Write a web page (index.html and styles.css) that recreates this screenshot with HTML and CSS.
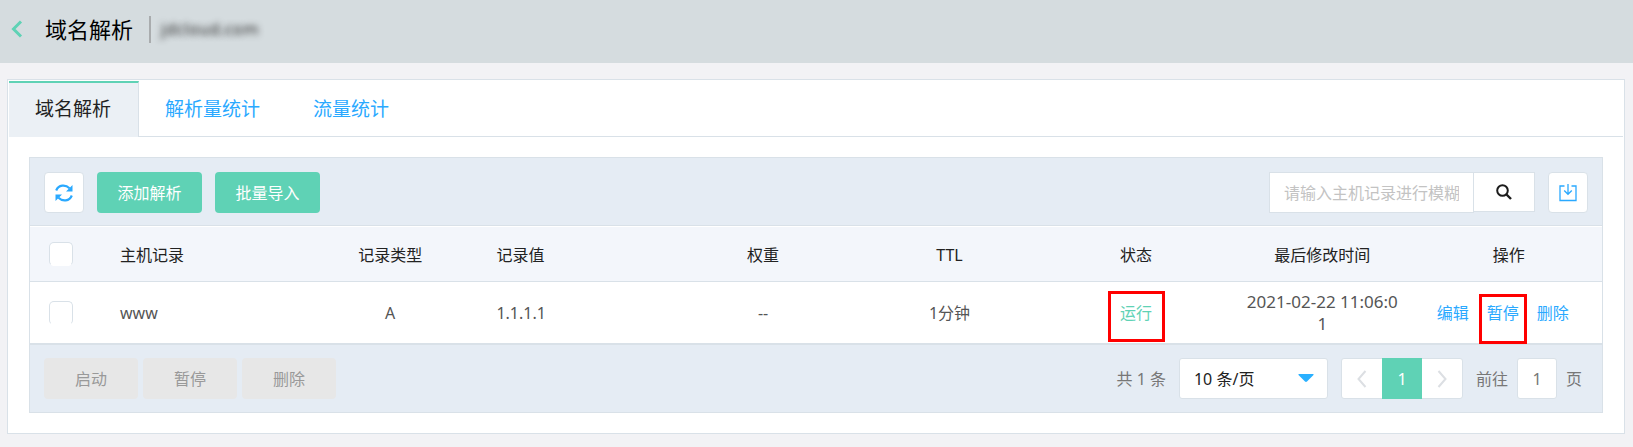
FILE: index.html
```html
<!DOCTYPE html>
<html lang="zh-CN">
<head>
<meta charset="utf-8">
<title>域名解析</title>
<link rel="stylesheet" href="styles.css">
</head>
<body>
<header class="page-head">
  <a class="back" href="#" aria-label="返回"><svg width="12" height="18" viewBox="0 0 12 18"><path d="M10 1.500 2.500 9l7.500 7.500" fill="none" stroke="#5fd2b5" stroke-width="3"/></svg></a>
  <h1 class="title">域名解析</h1>
  <span class="domain">jdcloud.com</span>
</header>
<main class="card">
  <nav class="tabs">
    <a class="tab tab-active" href="#">域名解析</a>
    <a class="tab" href="#">解析量统计</a>
    <a class="tab" href="#">流量统计</a>
  </nav>
  <section class="panel">
    <div class="toolbar">
      <button class="icon-btn" type="button" aria-label="刷新"><svg width="18" height="18" viewBox="0 0 18 18"><g fill="none" stroke="#2aa9ff" stroke-width="2.200"><path d="M1.200 6.500C3.500.6 10.500.2 14.500 4.200"/><path d="M16.800 11.500C14.500 17.400 7.500 17.800 3.500 13.800"/></g><path d="M17.500 1v6.500H11zM.5 17v-6.500H7z" fill="#2aa9ff"/></svg></button>
      <button class="btn" type="button">添加解析</button>
      <button class="btn" type="button">批量导入</button>
      <form class="search">
        <input class="search-input" type="text" aria-label="主机记录" placeholder="请输入主机记录进行模糊查询">
        <button class="search-btn" type="button" aria-label="搜索"><svg width="16" height="16" viewBox="0 0 16 16"><circle cx="6.500" cy="6.500" r="5.300" fill="none" stroke="#1c1c1c" stroke-width="2"/><path d="m10.500 10.500 4.500 4.500" stroke="#1c1c1c" stroke-width="2.400"/></svg></button>
      </form>
      <button class="icon-btn" type="button" aria-label="导出"><svg width="18" height="18" viewBox="0 0 18 18"><g fill="none" stroke="#2aa9ff" stroke-width="1.300"><path d="M5.500 2H1v14.500h16V2h-4.500"/><path d="M9 0v10M5.200 6.500 9 10.300l3.800-3.800"/></g></svg></button>
    </div>
    <table class="records">
      <colgroup><col class="col-check"><col class="col-host"><col><col><col><col><col><col><col></colgroup>
      <thead>
        <tr>
          <th class="check"><input class="checkbox" type="checkbox" aria-label="全选"></th>
          <th class="left">主机记录</th><th>记录类型</th><th class="left">记录值</th><th>权重</th><th>TTL</th><th>状态</th><th>最后修改时间</th><th>操作</th>
        </tr>
      </thead>
      <tbody>
        <tr>
          <td class="check"><input class="checkbox" type="checkbox" aria-label="选择 www"></td>
          <td class="left">www</td><td>A</td><td class="left">1.1.1.1</td><td>--</td><td>1分钟</td>
          <td><span class="running marked">运行</span></td>
          <td class="time">2021-02-22 11:06:0<br>1</td>
          <td><div class="actions"><a href="#">编辑</a><a class="marked marked-narrow" href="#">暂停</a><a href="#">删除</a></div></td>
        </tr>
      </tbody>
    </table>
    <footer class="foot">
      <div class="bulk">
        <button class="bulk-btn" type="button" disabled>启动</button>
        <button class="bulk-btn" type="button" disabled>暂停</button>
        <button class="bulk-btn" type="button" disabled>删除</button>
      </div>
      <div class="paging">
        <span>共 1 条</span>
        <div class="size">
          <select class="size-select" aria-label="每页条数"><option>10 条/页</option></select>
          <svg class="caret" width="16" height="8" viewBox="0 0 16 8"><path d="M1 0h14q1 0 .5 1L9 7.500q-1 .8-2 0L.5 1Q0 0 1 0z" fill="#2ab0ff"/></svg>
        </div>
        <div class="pager">
          <button class="page-btn" type="button" aria-label="上一页"><svg width="10" height="18" viewBox="0 0 10 18"><path d="M8.500 1 1.500 9l7 8" fill="none" stroke="#dcdfe3" stroke-width="2"/></svg></button>
          <button class="page-btn page-now" type="button">1</button>
          <button class="page-btn" type="button" aria-label="下一页"><svg width="10" height="18" viewBox="0 0 10 18"><path d="m1.500 1 7 8-7 8" fill="none" stroke="#dcdfe3" stroke-width="2"/></svg></button>
        </div>
        <label class="jump">前往<input class="jump-input" type="text" value="1">页</label>
      </div>
    </footer>
  </section>
</main>
</body>
</html>
```
FILE: styles.css
```css
* { box-sizing: border-box; }
body {
  margin: 0;
  background: #f2f2f5;
  color: #555;
  font: 16px/22px "Noto Sans", "Noto Sans CJK SC", sans-serif;
}
button, input, select { font: inherit; margin: 0; }
a { color: #2aa9ff; text-decoration: none; }
svg { display: block; }

.page-head {
  display: flex;
  align-items: center;
  height: 63px;
  padding: 0 11px 5px;
  background: #d5dcdf;
}
.title {
  margin: 0 16px 0 22px;
  color: #000;
  font-size: 22px;
  font-weight: 400;
  line-height: 28px;
}
.domain {
  display: flex;
  align-items: center;
  height: 27px;
  padding-left: 10px;
  border-left: 2px solid #a9acae;
  color: transparent;
  font-size: 17px;
  text-shadow: 0 0 6px #333;
}

.card {
  margin: 16px 8px 12px 7px;
  padding: 1px 1px 20px;
  border: 1px solid #d9e1e8;
  background: #fff;
}
.tabs {
  display: flex;
  border-bottom: 1px solid #d9e1e8;
}
.tab {
  height: 55px;
  padding: 0 27px 0 26px;
  font-size: 19px;
  font-weight: 400;
  line-height: 56px;
}
.tab-active {
  height: 56px;
  margin-bottom: -1px;
  border-top: 2px solid #5fd2b5;
  border-right: 1px solid #d9e1e8;
  background: #ebf0f5;
  color: #222;
  line-height: 53px;
}

.panel {
  margin: 20px 20px 0;
  border: 1px solid #d9e1e8;
}
.toolbar {
  display: flex;
  align-items: center;
  gap: 13px;
  height: 68px;
  padding: 2px 14px 0;
  border-bottom: 1px solid #d9e1e8;
  background: #e5ecf4;
}
.icon-btn {
  display: grid;
  place-items: center;
  width: 40px;
  height: 41px;
  padding: 0;
  border: 1px solid #d9e1e8;
  border-radius: 4px;
  background: #fff;
}
.btn {
  width: 105px;
  height: 41px;
  padding: 0;
  border: 0;
  border-radius: 4px;
  background: #5fd2b5;
  color: #fff;
}
.search { display: flex; margin-left: auto; }
.search-input {
  width: 205px;
  height: 41px;
  padding: 0 14px;
  border: 1px solid #d9e1e8;
  border-radius: 0;
  background: #fff;
}
.search-input::placeholder { color: #c3c3c3; }
.search-btn {
  display: grid;
  place-items: center;
  width: 61px;
  height: 40px;
  padding: 0;
  border: 1px solid #d9e1e8;
  border-left: 0;
  background: #fff;
}

.records {
  width: 100%;
  table-layout: fixed;
  border-collapse: separate;
  border-spacing: 0;
  background: #fff;
  text-align: center;
}
.col-check { width: 77px; }
.col-host { width: 190px; }
.records th, .records td { padding: 0 13px; }
.records th {
  height: 56px;
  padding-top: 1px;
  border-top: 1px solid #fff;
  border-bottom: 1px solid #d9e1e8;
  background: #f3f6fb;
  color: #222;
  font-weight: 400;
}
.records td {
  height: 63px;
  border-bottom: 2px solid #d9e1e8;
}
.records .left { text-align: left; }
.records .time { font-size: 17px; }
.records .check { padding: 0 0 0 19px; text-align: left; }
.checkbox {
  display: block;
  width: 24px;
  height: 24px;
  appearance: none;
  border: 1px solid #d9e1e8;
  border-bottom-color: #fff;
  border-radius: 5px;
  background: #fff;
}
.running { color: #5fd2b5; }
.actions {
  display: flex;
  justify-content: center;
  gap: 18px;
  margin: 0 6px 0 -6px;
}
.marked { position: relative; }
.marked::after {
  content: "";
  position: absolute;
  inset: -11px -13px -18px -12px;
  border: 3px solid #f00;
}
.marked-narrow::after { inset: -8px -8px -20px; }

.foot {
  display: flex;
  justify-content: space-between;
  align-items: center;
  height: 67px;
  padding: 0 20px 0 14px;
  background: #e5ecf4;
  color: #777;
}
.bulk { display: flex; gap: 5px; }
.bulk-btn {
  width: 94px;
  height: 41px;
  padding: 0;
  border: 0;
  border-radius: 4px;
  background: #e7e7e7;
  color: #999;
}
.paging { display: flex; align-items: center; gap: 13px; }
.size { position: relative; }
.size-select {
  display: block;
  width: 149px;
  height: 41px;
  padding: 0 14px;
  appearance: none;
  border: 1px solid #d9e1e8;
  border-radius: 3px;
  background: #fff;
  color: #222;
}
.caret {
  position: absolute;
  top: 16px;
  right: 14px;
  pointer-events: none;
}
.pager {
  display: flex;
  border: 1px solid #d9e1e8;
  border-radius: 3px;
  background: #fff;
}
.page-btn {
  display: grid;
  place-items: center;
  width: 40px;
  height: 39px;
  padding: 0;
  border: 0;
  background: none;
}
.page-now {
  height: 41px;
  margin: -1px 0;
  background: #5fd2b5;
  color: #fff;
}
.jump { display: flex; align-items: center; gap: 9px; }
.jump-input {
  width: 40px;
  height: 41px;
  padding: 0;
  border: 1px solid #d9e1e8;
  border-radius: 3px;
  background: #fff;
  color: #777;
  text-align: center;
}
```
